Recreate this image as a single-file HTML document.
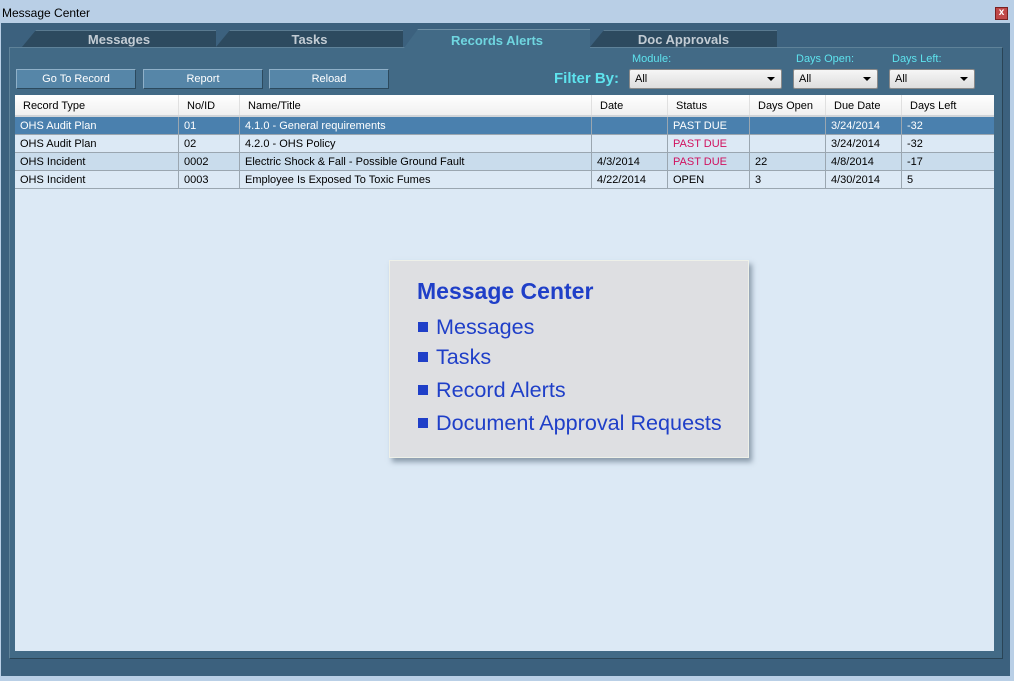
<!DOCTYPE html>
<html><head><meta charset="utf-8"><style>
*{box-sizing:border-box;margin:0;padding:0}
body{width:1014px;height:681px;position:relative;overflow:hidden;background:#b9cfe6;font-family:"Liberation Sans",sans-serif;font-size:11px}
.a{position:absolute}
.tab{position:absolute;background:#2d4a5f;color:#c3ccd4;font-weight:bold;font-size:13px;text-align:center;line-height:17px;border-top:1px solid #5a7a90;clip-path:polygon(14px 0,100% 0,100% 100%,0 100%)}
.btn{position:absolute;top:69px;height:20px;background:#5686a8;border:1px solid #8fb0c8;border-right-color:#2c4a5e;border-bottom-color:#2c4a5e;color:#fff;text-align:center;line-height:19px;font-size:11px}
.sel{position:absolute;top:69px;height:20px;background:linear-gradient(#f6f6f6,#dedede);border:1px solid #8a8a8a;border-radius:2px;line-height:19px;padding-left:5px;color:#000}
.sel:after{content:"";position:absolute;right:6px;top:7px;border-left:4px solid transparent;border-right:4px solid transparent;border-top:4px solid #000}
.lbl{position:absolute;top:53px;color:#5ee3ee;font-size:11px}
.row{position:absolute;left:15px;width:979px;height:18px;border-bottom:1px solid #9aa6b0;line-height:19px}
.row span,.hd span{position:absolute;top:0;padding-left:5px;height:100%;border-left:1px solid #9aa6b0}
.hd{position:absolute;left:15px;top:95px;width:979px;height:22px;background:linear-gradient(#fff,#f0f0f0);border-bottom:2px solid #d0d4d8;line-height:22px}
.hd span{border-left:1px solid #e0e0e0;padding-left:8px}
.pd{color:#d0115e}
.pop{position:absolute;left:389px;top:260px;width:360px;height:198px;background:#dedfe2;border:1px solid #eef0e8;box-shadow:3px 4px 5px rgba(60,80,100,.5);color:#1f3fc8}
.pop div{position:absolute;left:28px;font-size:21.6px}
.pop i{display:inline-block;width:10px;height:10px;background:#1f3fc8;margin-right:8px;vertical-align:2px}
</style></head><body>
<div class="a" style="left:2px;top:6px;font-size:12px;color:#000">Message Center</div>
<div class="a" style="left:995px;top:7px;width:13px;height:13px;background:#c04848;border:1px solid #7a2020;color:#fff;font-size:10px;line-height:10px;text-align:center;font-weight:bold">x</div>
<div class="a" style="left:1px;top:23px;width:1009px;height:653px;background:#3c617e"></div>
<div class="a" style="left:9px;top:47px;width:994px;height:612px;background:#426a86;border-top:1px solid #5f8299;border-left:1px solid #5f8299;border-right:1px solid #2a4456;border-bottom:1px solid #2a4456"></div>
<div class="tab" style="left:22px;top:30px;width:194px;height:17px">Messages</div>
<div class="tab" style="left:216px;top:30px;width:187px;height:17px">Tasks</div>
<div class="tab" style="left:404px;top:29px;width:186px;height:19px;background:#426a86;color:#6fd6e0;line-height:21px;border-top:1px solid #6f90a5">Records Alerts</div>
<div class="tab" style="left:590px;top:30px;width:187px;height:17px">Doc Approvals</div>
<div class="btn" style="left:16px;width:120px">Go To Record</div>
<div class="btn" style="left:143px;width:120px">Report</div>
<div class="btn" style="left:269px;width:120px">Reload</div>
<div class="a" style="left:554px;top:70px;color:#5ee3ee;font-size:15px;font-weight:bold">Filter By:</div>
<div class="lbl" style="left:632px">Module:</div>
<div class="lbl" style="left:796px">Days Open:</div>
<div class="lbl" style="left:892px">Days Left:</div>
<div class="sel" style="left:629px;width:153px">All</div>
<div class="sel" style="left:793px;width:85px">All</div>
<div class="sel" style="left:889px;width:86px">All</div>
<div class="a" style="left:15px;top:95px;width:979px;height:556px;background:#dce9f5"></div>
<div class="hd"><span style="left:0;border:0">Record Type</span><span style="left:163px">No/ID</span><span style="left:224px">Name/Title</span><span style="left:576px">Date</span><span style="left:652px">Status</span><span style="left:734px">Days Open</span><span style="left:810px">Due Date</span><span style="left:886px">Days Left</span></div>
<div class="row" style="top:117px;background:#4a80ae;color:#fff"><span style="left:0;border:0">OHS Audit Plan</span><span style="left:163px">01</span><span style="left:224px">4.1.0 - General requirements</span><span style="left:576px"></span><span style="left:652px">PAST DUE</span><span style="left:734px"></span><span style="left:810px">3/24/2014</span><span style="left:886px">-32</span></div>
<div class="row" style="top:135px;background:#dce9f5"><span style="left:0;border:0">OHS Audit Plan</span><span style="left:163px">02</span><span style="left:224px">4.2.0 - OHS Policy</span><span style="left:576px"></span><span style="left:652px" class="pd">PAST DUE</span><span style="left:734px"></span><span style="left:810px">3/24/2014</span><span style="left:886px">-32</span></div>
<div class="row" style="top:153px;background:#c9dcec"><span style="left:0;border:0">OHS Incident</span><span style="left:163px">0002</span><span style="left:224px">Electric Shock &amp; Fall - Possible Ground Fault</span><span style="left:576px">4/3/2014</span><span style="left:652px" class="pd">PAST DUE</span><span style="left:734px">22</span><span style="left:810px">4/8/2014</span><span style="left:886px">-17</span></div>
<div class="row" style="top:171px;background:#dce9f5"><span style="left:0;border:0">OHS Incident</span><span style="left:163px">0003</span><span style="left:224px">Employee Is Exposed To Toxic Fumes</span><span style="left:576px">4/22/2014</span><span style="left:652px">OPEN</span><span style="left:734px">3</span><span style="left:810px">4/30/2014</span><span style="left:886px">5</span></div>
<div class="pop">
<div style="top:17px;font-weight:bold;font-size:23px;left:27px">Message Center</div>
<div style="top:53px"><i></i>Messages</div>
<div style="top:83px"><i></i>Tasks</div>
<div style="top:116px"><i></i>Record Alerts</div>
<div style="top:149px"><i></i>Document Approval Requests</div>
</div>
</body></html>
